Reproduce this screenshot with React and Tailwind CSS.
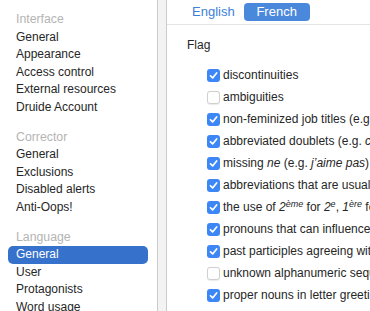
import React from "react";

const sections = [
	{ title: "Interface", items: ["General", "Appearance", "Access control", "External resources", "Druide Account"] },
	{ title: "Corrector", items: ["General", "Exclusions", "Disabled alerts", "Anti-Oops!"] },
	{ title: "Language", items: ["General", "User", "Protagonists", "Word usage"], selected: 0 },
];

const flags = [
	{ on: true, label: <>discontinuities</> },
	{ on: false, label: <>ambiguities</> },
	{ on: true, label: <>non-feminized job titles (e.g. <i>directeur</i> for a woman)</> },
	{ on: true, label: <>abbreviated doublets (e.g. <i>citoyen·ne·s</i>)</> },
	{ on: true, label: <>missing <i>ne</i> (e.g. <i>j’aime pas</i>)</> },
	{ on: true, label: <>abbreviations that are usually written in full</> },
	{
		on: true,
		label: (
			<>
				the use of <i>2<sup>ème</sup></i> for <i>2<sup>e</sup></i>, <i>1<sup>ère</sup></i> for <i>1<sup>re</sup></i>
			</>
		),
	},
	{ on: true, label: <>pronouns that can influence agreement</> },
	{ on: true, label: <>past participles agreeing with a preceding object</> },
	{ on: false, label: <>unknown alphanumeric sequences</> },
	{ on: true, label: <>proper nouns in letter greetings</> },
];

const Checkbox = ({ on }) =>
	on ? (
		<span className="flex h-[13px] w-[13px] shrink-0 items-center justify-center rounded-[3px] bg-[#3c87f5]">
			<svg width="9" height="9" viewBox="0 0 10 10" fill="none">
				<path d="M1.6 5.3 L4 7.7 L8.5 2.2" stroke="white" strokeWidth="1.9" strokeLinecap="round" strokeLinejoin="round" />
			</svg>
		</span>
	) : (
		<span className="h-[13px] w-[13px] shrink-0 rounded-[3px] border border-[#cfcfcf] bg-white shadow-[0_0.5px_1px_rgba(0,0,0,0.08)]" />
	);

export default function App() {
	return (
		<div className="flex h-[311px] w-[370px] overflow-hidden bg-white font-['Liberation_Sans',Arial,sans-serif] text-[12px] text-[#262626]">
			{/* Sidebar */}
			<aside className="w-[157px] shrink-0 pl-2 pr-[9px] pt-[11px]">
				{sections.map((s, si) => (
					<div key={s.title} className={si > 0 ? "mt-3" : ""}>
						<div className="px-2 text-[12.3px] leading-[17.6px] text-[#b4b4b4]">{s.title}</div>
						{s.items.map((item, i) => (
							<div
								key={item}
								className={
									s.selected === i
										? "rounded-[5px] bg-[#3672cb] px-2 leading-[17.6px] text-white"
										: "px-2 leading-[17.6px]"
								}
							>
								{item}
							</div>
						))}
					</div>
				))}
			</aside>

			{/* Splitter */}
			<div className="w-[10px] shrink-0 border-x border-[#cbcbcb] bg-[#f3f3f3]" />

			{/* Main pane */}
			<main className="min-w-0 flex-1 overflow-hidden">
				<div className="flex h-[25px] items-start border-b border-[#e4e4e4] pl-[25px] pt-[3px] text-[13px]">
					<span className="leading-[18px] text-[#3d7fd9]">English</span>
					<span className="ml-[9px] w-[66px] rounded-[4px] bg-[#4a88dc] text-center leading-[18px] text-white">
						French
					</span>
				</div>

				<div className="mt-3 pl-5 leading-4">Flag</div>

				<div className="mt-[11px] pl-10">
					{flags.map((f, i) => (
						<div key={i} className="flex h-[22px] items-center gap-[3px] whitespace-nowrap">
							<Checkbox on={f.on} />
							<span>{f.label}</span>
						</div>
					))}
				</div>
			</main>
		</div>
	);
}
